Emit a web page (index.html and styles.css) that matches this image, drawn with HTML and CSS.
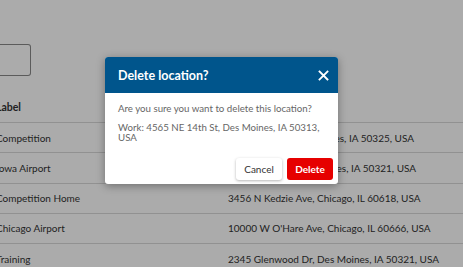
FILE: index.html
```html
<!DOCTYPE html>
<html>
<head>
<meta charset="utf-8">
<link rel="stylesheet" href="styles.css">
</head>
<body>
<div class="page">
  <div class="search"></div>
  <table class="locs">
    <thead>
      <tr><th class="c-label">Label</th><th class="c-addr"></th></tr>
    </thead>
    <tbody>
      <tr><td>Competition</td><td>1234 Main St, Des Moines, IA 50325, USA</td></tr>
      <tr><td>Iowa Airport</td><td>5800 Fleur Dr, Des Moines, IA 50321, USA</td></tr>
      <tr><td>Competition Home</td><td>3456 N Kedzie Ave, Chicago, IL 60618, USA</td></tr>
      <tr><td>Chicago Airport</td><td>10000 W O'Hare Ave, Chicago, IL 60666, USA</td></tr>
      <tr><td>Training</td><td>2345 Glenwood Dr, Des Moines, IA 50321, USA</td></tr>
    </tbody>
  </table>
</div>
<div class="overlay"></div>
<div class="modal">
  <div class="modal-head">
    <span class="modal-title">Delete location?</span>
    <svg class="close" width="11" height="11" viewBox="0 0 11 11"><path d="M1.5 1.5 L9.5 9.5 M9.5 1.5 L1.5 9.5" stroke="#fff" stroke-width="1.8" stroke-linecap="square"/></svg>
  </div>
  <div class="modal-body">
    <p>Are you sure you want to delete this location?</p>
    <p>Work: 4565 NE 14th St, Des Moines, IA 50313, USA</p>
  </div>
  <div class="modal-foot">
    <button class="btn btn-cancel">Cancel</button>
    <button class="btn btn-delete">Delete</button>
  </div>
</div>
</body>
</html>
```
FILE: styles.css
```css
html, body { margin: 0; padding: 0; }
body {
  background: #fff;
  font-family: Lato, "Open Sans", sans-serif;
  color: #333;
  width: 463px;
  height: 267px;
  overflow: hidden;
  position: relative;
}
.page {
  margin-left: -4px;
  padding-top: 44px;
}
.search {
  width: 30px;
  height: 30px;
  border: 1px solid #888;
  border-left: none;
  border-radius: 0 3px 3px 0;
  margin-left: 4px;
}
.locs {
  border-collapse: collapse;
  margin-top: 16px;
  width: 480px;
  font-size: 10px;
}
.locs th {
  text-align: left;
  font-weight: bold;
  font-size: 10.5px;
  height: 30px;
  padding: 0;
  border-bottom: 1px solid #d8d8d8;
}
.locs td {
  height: 29.25px;
  padding: 0;
  border-bottom: 1px solid #d8d8d8;
}
.locs td:first-child, .locs th:first-child { width: 232px; }
.overlay {
  position: absolute;
  inset: 0;
  background: rgba(0,0,0,0.33);
}
.modal {
  position: absolute;
  left: 105px;
  top: 57px;
  width: 233px;
  background: #fff;
  border-radius: 3px;
  box-shadow: 0 2px 8px rgba(0,0,0,0.35);
  overflow: hidden;
}
.modal-head {
  background: #00558c;
  height: 36px;
  display: flex;
  align-items: center;
  justify-content: space-between;
  padding: 0 9px 0 13px;
}
.modal-title {
  color: #fff;
  font-size: 12.5px;
  font-weight: bold;
}
.close { display: block; }
.modal-body {
  padding: 10px 13px 0 13px;
  font-size: 9.7px;
  color: #666;
}
.modal-body p { margin: 0 0 9px 0; line-height: 10px; }
.modal-body p:last-child { margin-bottom: 0; }
.modal-foot {
  display: flex;
  justify-content: flex-end;
  gap: 5px;
  padding: 16px 5px 4px 0;
}
.btn {
  font-family: inherit;
  font-size: 10px;
  height: 22px;
  width: 46px;
  border-radius: 3px;
  border: none;
  padding: 0;
}
.btn-cancel {
  background: #fff;
  color: #333;
  box-shadow: 0 1px 3px rgba(0,0,0,0.3);
}
.btn-delete {
  background: #e60000;
  color: #fff;
  font-weight: bold;
}
```
